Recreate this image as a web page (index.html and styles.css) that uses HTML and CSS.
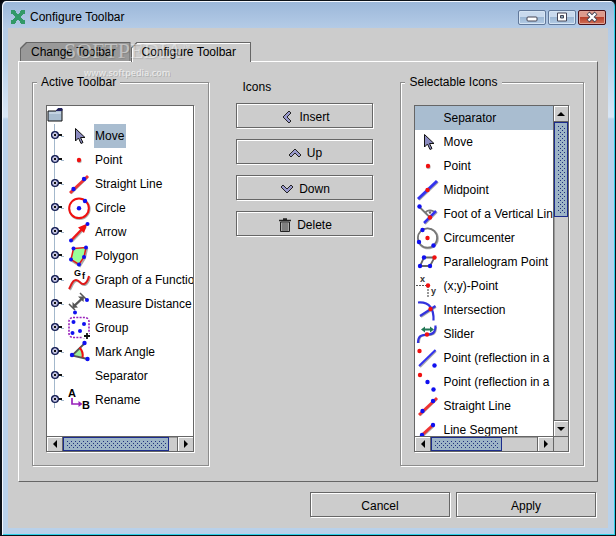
FILE: index.html
```html
<!DOCTYPE html>
<html lang="en">
<head>
<meta charset="utf-8">
<title>Configure Toolbar</title>
<link rel="stylesheet" href="styles.css">
</head>
<body>
<svg class="defs" aria-hidden="true">
  <symbol id="pointer" viewBox="0 0 24 24"><path d="M8.500 4.500v12.500l3-3 2.500 5.500 2-1-2.500-5h4.500z" fill="#8b8bc0" stroke="#111" stroke-width="1"/></symbol>
  <symbol id="point" viewBox="0 0 24 24"><circle cx="12.500" cy="13" r="2.300" fill="#bbb"/><circle class="r" cx="12" cy="12" r="2.200"/></symbol>
  <symbol id="line" viewBox="0 0 24 24"><path class="sh" d="M4 21.500 21 5"/><path d="M3 21 21 4" stroke="#e33" stroke-width="3"/><circle class="b" cx="6.500" cy="17" r="2.200"/><circle class="b" cx="17" cy="7" r="2.200"/></symbol>
  <symbol id="segment" viewBox="0 0 24 24"><path class="sh" d="M7 18 18 8"/><path d="M6 17 17 7" stroke="#e33" stroke-width="3"/><circle class="b" cx="6" cy="17" r="2.200"/><circle class="b" cx="17" cy="7" r="2.200"/></symbol>
  <symbol id="circle" viewBox="0 0 24 24"><circle cx="12.600" cy="13" r="10" fill="none" stroke="#aaa" stroke-width="2"/><circle cx="12" cy="12.300" r="9.800" fill="#fff" stroke="#f01010" stroke-width="2"/><circle class="b" cx="12" cy="12.300" r="2.200"/><circle class="b" cx="18" cy="5" r="2.200"/></symbol>
  <symbol id="arrow" viewBox="0 0 24 24"><path class="sh" d="M5 21.500 19 7"/><path d="M4 20.500 17 7" stroke="#f01818" stroke-width="2.500"/><path d="M20.500 3.500 11 7.500 17 13z" fill="#f01010"/><circle class="b" cx="4" cy="20.500" r="2"/><circle class="b" cx="20.500" cy="4" r="2"/></symbol>
  <symbol id="polygon" viewBox="0 0 24 24"><path class="sh" d="M7.500 6 20 5 18 14 13 22 5 17z"/><path d="M6.500 4.500 19 3.500 17 13 12 20.500 4 15.500z" fill="#9f9" stroke="#e01818" stroke-width="1.500"/><circle class="b" cx="6.500" cy="4.500" r="2"/><circle class="b" cx="19" cy="3.500" r="2"/><circle class="b" cx="17" cy="13" r="2"/><circle class="b" cx="12" cy="20.500" r="2"/><circle class="b" cx="4" cy="15.500" r="2"/></symbol>
  <symbol id="measure" viewBox="0 0 24 24"><path class="sh" d="M7 14.500 16 6"/><path d="M7 14 15 6.500" stroke="#555" stroke-width="2"/><path d="M5.500 16V10l5.500 5.500zM17 4.500h-6l5.500 5.500z" fill="#555"/><path d="M2 12l6 6M13 1l6 6" stroke="#555" stroke-width="1.500"/><circle class="b" cx="20" cy="8" r="2"/><circle class="b" cx="8" cy="20.500" r="2"/></symbol>
  <symbol id="group" viewBox="0 0 24 24"><rect x="2" y="1.500" width="20" height="20" rx="4" fill="none" stroke="#92b" stroke-width="1.600" stroke-dasharray="2 1.300"/><circle class="b" cx="6.500" cy="6" r="2"/><circle class="b" cx="17" cy="8" r="2"/><circle class="b" cx="13" cy="15" r="2"/><circle class="b" cx="5.500" cy="17" r="2"/><path d="M16 20h8M20 16v8" stroke="#fff" stroke-width="4"/><path d="M17 20h6M20 17v6" stroke="#111" stroke-width="1.800"/></symbol>
  <symbol id="angle" viewBox="0 0 24 24"><path d="M5 15 13 7q4 4 3 10z" fill="#9e9"/><path d="M18 3 5 15.500 20.500 19" fill="none" stroke="#555" stroke-width="1.800"/><path d="M12.500 7.500q4 4 3 10" fill="none" stroke="#f01010" stroke-width="2"/><circle class="b" cx="5" cy="15" r="2.200"/><circle class="b" cx="17.500" cy="3" r="2.200"/><circle class="b" cx="20.500" cy="19" r="2.200"/></symbol>
  <symbol id="midpoint" viewBox="0 0 24 24"><path class="sh" d="M3 22 22 4"/><path d="M2 21 21 3" stroke="#33e" stroke-width="3"/><circle class="r" cx="11.500" cy="12" r="2.200"/></symbol>
  <symbol id="foot" viewBox="0 0 24 24"><path class="sh" d="M9 22 21 10"/><path d="M3 4.500 14 15.500M9 11a6 6 0 0 1 10 0" fill="none" stroke="#777" stroke-width="1.800"/><path d="M8 21 20 9" stroke="#33e" stroke-width="2.500"/><circle cx="14" cy="10.500" r="1.200" fill="#666"/><circle class="b" cx="3.500" cy="4.500" r="2.200"/><circle class="r" cx="14" cy="15.500" r="2.200"/></symbol>
  <symbol id="circum" viewBox="0 0 24 24"><circle cx="12" cy="12.500" r="9.800" fill="none" stroke="#aaa" stroke-width="2"/><circle cx="11.500" cy="12" r="9.600" fill="#fff" stroke="#777" stroke-width="1.800"/><circle class="b" cx="6.500" cy="4" r="2.200"/><circle class="b" cx="3" cy="16" r="2.200"/><circle class="b" cx="17.500" cy="19.500" r="2.200"/><circle class="r" cx="11.500" cy="12" r="2.200"/></symbol>
  <symbol id="para" viewBox="0 0 24 24"><path d="M8 7.500h10.500L14 16H4z" fill="none" stroke="#666" stroke-width="1.800"/><circle class="b" cx="8" cy="7.500" r="2.200"/><circle class="r" cx="18.500" cy="7.500" r="2.200"/><circle class="b" cx="14" cy="16" r="2.200"/><circle class="b" cx="4" cy="16" r="2.200"/></symbol>
  <symbol id="intersect" viewBox="0 0 24 24"><path class="sh" d="M5 19 20 9"/><path d="M2 4.500c12-1 16 7 15.500 18M4 18 19.500 8" fill="none" stroke="#33d" stroke-width="2.200"/><circle class="r" cx="14.500" cy="11" r="2.200"/></symbol>
  <symbol id="slider" viewBox="0 0 24 24"><path class="sh" d="M3 21c0-8 4-8 9-8 6 0 8-2 8-8"/><path d="M2 21c0-8 4-8 9-8.500 6 0 8.500-2 8.500-9" fill="none" stroke="#33d" stroke-width="2.200"/><path d="m5 7.500 4-3v2h5v-2l4 3-4 3v-2H9v2z" fill="#275"/><circle class="r" cx="11" cy="12.500" r="2.200"/></symbol>
  <symbol id="mirror" viewBox="0 0 24 24"><path class="sh" d="M4 21 20 5"/><path d="M3 20 19.500 4" stroke="#33e" stroke-width="2"/><circle class="r" cx="3.500" cy="5" r="2.200"/><circle class="b" cx="18.500" cy="19.500" r="2.200"/></symbol>
  <symbol id="pmirror" viewBox="0 0 24 24"><circle class="r" cx="4" cy="5" r="2.200"/><circle class="b" cx="11.500" cy="12" r="2.200"/><circle class="b" cx="17.500" cy="19.500" r="2.200"/></symbol>
  <symbol id="handle" viewBox="0 0 16 24"><path d="M7 11h5" stroke="#111" stroke-width="2"/><path d="M11 12.500h3" stroke="#a3b8cc"/><circle cx="5" cy="11" r="3.300" fill="#fff" stroke="#111b50" stroke-width="1.500"/><circle cx="5" cy="11" r="2.200" fill="none" stroke="#99c" stroke-width="1"/><path d="M4 10h2v2H4z" fill="#111"/></symbol>
</svg>

<main class="window">
  <header class="titlebar">
    <svg class="logo" viewBox="0 0 14 14"><path d="M0 0h4v1h1v2h1v1h2V3h1V1h1V0h4v4h-2v1h-1v1h-1v2h1v1h1v1h2v4h-4v-1H9v-2H8v-1H6v1H5v2H4v1H0v-4h2V9h1V8h1V6H3V5H2V4H0z" fill="#329968"/></svg>
    <h1>Configure Toolbar</h1>
    <button class="wb" aria-label="Minimize"><svg viewBox="0 0 14 12"><rect x="2" y="6" width="10" height="4" rx="1" fill="#fff" stroke="#445" /></svg></button>
    <button class="wb" aria-label="Maximize"><svg viewBox="0 0 14 12"><path d="M2.500 2h9v8h-9z" fill="#fff" stroke="#445"/><path d="M5.500 4.500h3v2.500h-3z" fill="#8ab" stroke="#445"/></svg></button>
    <button class="wb close" aria-label="Close"><svg viewBox="0 0 14 12"><path d="m3 2 8 8M11 2l-8 8" stroke="#445" stroke-width="4"/><path d="m3.500 2.500 7 7M10.500 2.500l-7 7" stroke="#fff" stroke-width="2.400"/></svg></button>
  </header>

  <div class="content">
    <div class="tabs" role="tablist">
      <button class="tab back" role="tab" aria-selected="false"><span>Change Toolbar</span></button>
      <button class="tab front" role="tab" aria-selected="true"><span>Configure Toolbar</span></button>
      <div class="mark" aria-hidden="true"><b>SOFTPEDIA<sup>™</sup></b><i>www.softpedia.com</i></div>
    </div>
    <section class="panel">
      <fieldset>
        <legend>Active Toolbar</legend>
        <div class="box">
          <div class="tree">
            <svg class="folder" viewBox="0 0 16 16"><path d="M1 14V4h8l2-2h4v12z" fill="#a9bdd0" stroke="#111"/><path d="M9.500 3.500 11 1.500h4v2z" fill="#224" stroke="#226"/><path d="M2 6h12" stroke="#dde8f4"/></svg>
            <ul class="nodes">
              <li class="picked"><svg class="h"><use href="#handle"/></svg><svg class="i"><use href="#pointer"/></svg><span>Move</span></li>
              <li><svg class="h"><use href="#handle"/></svg><svg class="i"><use href="#point"/></svg><span>Point</span></li>
              <li><svg class="h"><use href="#handle"/></svg><svg class="i"><use href="#line"/></svg><span>Straight Line</span></li>
              <li><svg class="h"><use href="#handle"/></svg><svg class="i"><use href="#circle"/></svg><span>Circle</span></li>
              <li><svg class="h"><use href="#handle"/></svg><svg class="i"><use href="#arrow"/></svg><span>Arrow</span></li>
              <li><svg class="h"><use href="#handle"/></svg><svg class="i"><use href="#polygon"/></svg><span>Polygon</span></li>
              <li><svg class="h"><use href="#handle"/></svg><svg class="i" viewBox="0 0 24 24"><path class="sh" d="M3 22C5 19 6 13 10 13s4 5 8 4c3-1 4-4 5-8"/><path d="M2 21C4 18 5 12 9 12s4 5 8 4c3-1 4-4 5-8" fill="none" stroke="#e01818" stroke-width="2"/><text x="7" y="8" class="gl">G</text><text x="15" y="11" class="gl">f</text></svg><span>Graph of a Function</span></li>
              <li><svg class="h"><use href="#handle"/></svg><svg class="i"><use href="#measure"/></svg><span>Measure Distance</span></li>
              <li><svg class="h"><use href="#handle"/></svg><svg class="i"><use href="#group"/></svg><span>Group</span></li>
              <li><svg class="h"><use href="#handle"/></svg><svg class="i"><use href="#angle"/></svg><span>Mark Angle</span></li>
              <li><svg class="h"><use href="#handle"/></svg><svg class="i"></svg><span>Separator</span></li>
              <li><svg class="h"><use href="#handle"/></svg><svg class="i" viewBox="0 0 24 24"><text x="1" y="9" class="nl">A</text><text x="15" y="21" class="nl">B</text><path d="M5 10v6h9" fill="none" stroke="#92b" stroke-width="1.700"/><path d="M11.500 13v6l4-3z" fill="#92b"/></svg><span>Rename</span></li>
            </ul>
          </div>
          <div class="bar across">
            <button class="step" aria-label="Scroll left"><svg viewBox="0 0 8 8"><path d="M6 0v8L2 4z"/></svg></button>
            <div class="track"><div class="thumb wide"></div></div>
            <button class="step" aria-label="Scroll right"><svg viewBox="0 0 8 8"><path d="M2 0v8l4-4z"/></svg></button>
          </div>
        </div>
      </fieldset>

      <div class="actions">
        <h2>Icons</h2>
        <button class="btn"><svg viewBox="0 0 14 14"><path d="m9 1 2 2-4 4 4 4-2 2-6-6z" fill="#99c" stroke="#222"/></svg>Insert</button>
        <button class="btn"><svg viewBox="0 0 14 14"><path d="m1 9 6-6 6 6-2 2-4-4-4 4z" fill="#99c" stroke="#222"/></svg>Up</button>
        <button class="btn"><svg viewBox="0 0 14 14"><path d="m1 5 2-2 4 4 4-4 2 2-6 6z" fill="#99c" stroke="#222"/></svg>Down</button>
        <button class="btn"><svg viewBox="0 0 14 14"><path d="M2.500 4h9v9.500h-9z" fill="#aaa" stroke="#222"/><path d="M1 2.500h12M5 1h4" stroke="#222" stroke-width="1.500"/><path d="M5 5v8M7 5v8M9 5v8" stroke="#555"/></svg>Delete</button>
      </div>

      <fieldset>
        <legend>Selectable Icons</legend>
        <div class="box both">
          <ul class="choices">
            <li class="picked"><svg class="i"></svg><span>Separator</span></li>
            <li><svg class="i"><use href="#pointer"/></svg><span>Move</span></li>
            <li><svg class="i"><use href="#point"/></svg><span>Point</span></li>
            <li><svg class="i"><use href="#midpoint"/></svg><span>Midpoint</span></li>
            <li><svg class="i"><use href="#foot"/></svg><span>Foot of a Vertical Line</span></li>
            <li><svg class="i"><use href="#circum"/></svg><span>Circumcenter</span></li>
            <li><svg class="i"><use href="#para"/></svg><span>Parallelogram Point</span></li>
            <li><svg class="i" viewBox="0 0 24 24"><path d="M0 11.500h11M12 12v11" stroke="#555" stroke-width="1.200" stroke-dasharray="2 1"/><circle class="r" cx="12" cy="11.500" r="2.200"/><text x="4" y="8" class="xl">x</text><text x="15" y="20" class="xl">y</text></svg><span>(x;y)-Point</span></li>
            <li><svg class="i"><use href="#intersect"/></svg><span>Intersection</span></li>
            <li><svg class="i"><use href="#slider"/></svg><span>Slider</span></li>
            <li><svg class="i"><use href="#mirror"/></svg><span>Point (reflection in a</span></li>
            <li><svg class="i"><use href="#pmirror"/></svg><span>Point (reflection in a</span></li>
            <li><svg class="i"><use href="#line"/></svg><span>Straight Line</span></li>
            <li><svg class="i"><use href="#segment"/></svg><span>Line Segment</span></li>
          </ul>
          <div class="bar down">
            <button class="step" aria-label="Scroll up"><svg viewBox="0 0 8 8"><path d="M0 6h8L4 2z"/></svg></button>
            <div class="track"><div class="thumb tall"></div></div>
            <button class="step" aria-label="Scroll down"><svg viewBox="0 0 8 8"><path d="M0 2h8L4 6z"/></svg></button>
          </div>
          <div class="bar across">
            <button class="step" aria-label="Scroll left"><svg viewBox="0 0 8 8"><path d="M6 0v8L2 4z"/></svg></button>
            <div class="track"><div class="thumb mid"></div></div>
            <button class="step" aria-label="Scroll right"><svg viewBox="0 0 8 8"><path d="M2 0v8l4-4z"/></svg></button>
          </div>
          <div class="corner"></div>
        </div>
      </fieldset>
    </section>
    <footer class="foot">
      <button class="btn">Cancel</button>
      <button class="btn">Apply</button>
    </footer>
  </div>
</main>
</body>
</html>
```
FILE: styles.css
```css
* { box-sizing: border-box; }
body {
  margin: 0;
  background: #05050c;
  font: 12px/16px "Liberation Sans", Arial, sans-serif;
  color: #000;
}
button { font: inherit; color: inherit; }
.defs { position: absolute; width: 0; height: 0; }
.r { fill: #f01010; }
.b { fill: #1010f0; }
.sh { fill: none; stroke: #aaa; stroke-width: 2; }
.gl { font: bold 9px "Liberation Sans", sans-serif; }
.nl { font: bold 11px "Liberation Sans", sans-serif; }
.xl { font: bold 9px "Liberation Sans", sans-serif; fill: #333; }

.window {
  display: flex;
  flex-direction: column;
  height: 100vh;
  min-height: 480px;
  padding: 0 7px 7px 6px;
  border: 1px solid #0b1118;
  border-left-width: 2px;
  background: linear-gradient(#9bb7d9, #b4cbe6 27px, #b9d1ea 60px, #d9e7f6 116px, #b9d1ea 118px);
  box-shadow: inset 1px 1px 0 #f4f8ff, inset -1px -1px 0 #2cd0e8;
  border-radius: 6px 6px 0 0;
}
.titlebar {
  display: flex;
  align-items: center;
  flex: none;
  height: 27px;
  padding: 5px 2px 0 3px;
}
.logo { width: 14px; height: 14px; }
h1 { flex: 1; margin: 0 0 0 5px; font-size: 12px; font-weight: 400; line-height: 16px; }
.wb {
  display: grid;
  place-items: center;
  width: 28px;
  height: 15px;
  margin-left: 2px;
  padding: 0;
  border: 1px solid #61789a;
  border-radius: 2px;
  background: linear-gradient(#c9daee 45%, #9db8d5 50%, #b4cce6);
  box-shadow: inset 0 0 0 1px #d6e5f4;
}
.wb svg { width: 14px; height: 12px; }
.close {
  border-color: #4a1018;
  background: linear-gradient(#dd9a8c 45%, #b8402c 50%, #d07058);
  box-shadow: inset 0 0 0 1px #e0a498;
}

.content {
  display: flex;
  flex: 1;
  flex-direction: column;
  min-height: 0;
  padding: 14px 10px 11px;
  background: #ccc;
}
.tabs { position: relative; display: flex; flex: none; height: 19px; padding-left: 2px; }
.tab {
  position: relative;
  isolation: isolate;
  height: 19px;
  padding: 0 15px 0 11px;
  border: 0;
  background: #666;
  clip-path: polygon(6px 0, 100% 0, 100% 100%, 0 100%, 0 6px);
}
.tab::before {
  content: "";
  position: absolute;
  z-index: -1;
  inset: 1px 1px 0 1px;
  background: #999;
  clip-path: polygon(6px 0, 100% 0, 100% 100%, 0 100%, 0 6px);
}
.front::before { background: #ccc; box-shadow: inset 1px 1px 0 #fff; }
.front { height: 20px; z-index: 1; }
.mark {
  position: absolute;
  z-index: 2;
  left: 46px;
  top: 0;
  color: rgba(255, 255, 255, .45);
  white-space: nowrap;
  pointer-events: none;
}
.mark b { display: block; font: 22px/18px "Liberation Serif", serif; text-shadow: 1px 1px 1px rgba(0, 0, 0, .12); }
.mark sup { font-size: 8px; line-height: 0; }
.mark i { display: block; margin: 5px 0 0 20px; font: 600 9px/16px "Open Sans", sans-serif; color: rgba(255, 255, 255, .6); text-shadow: 1px 1px 0 rgba(0, 0, 0, .15); }

.panel {
  display: grid;
  flex: 1;
  grid-template-columns: minmax(0, 177fr) 137px minmax(0, 183fr);
  grid-template-rows: minmax(0, 1fr);
  column-gap: 27px;
  min-height: 0;
  padding: 12px 13px 15px;
  border: 1px solid;
  border-color: #fff #666 #666 #fff;
}
fieldset {
  display: flex;
  min-width: 0;
  min-height: 0;
  margin: 0;
  padding: 15px 14px 13px 13px;
  border: 1px solid #8c8c8c;
  box-shadow: 1px 1px 0 #fff, inset 1px 1px 0 #fff;
}
legend { margin-left: -9px; padding: 0 4px; background: #ccc; }
.box {
  display: grid;
  flex: 1;
  grid-template-rows: minmax(0, 1fr) 15px;
  grid-template-columns: minmax(0, 1fr);
  min-width: 0;
  border: 1px solid #666;
  box-shadow: 1px 1px 0 #fff;
  background: #fff;
}
.both { grid-template-columns: minmax(0, 1fr) 15px; }
.tree, .choices { overflow: hidden; min-height: 0; }
ul { margin: 0; padding: 0; list-style: none; }
.folder { display: block; width: 16px; height: 16px; margin: 1px 0; }
.nodes { background: linear-gradient(#a3b8cc, #a3b8cc) 7px 0 / 1px 284px no-repeat; }
li { display: flex; height: 24px; white-space: nowrap; align-items: center; }
.h { flex: none; width: 16px; height: 24px; margin: 0 1px 0 3px; }
.i { flex: none; width: 24px; height: 24px; }
.nodes span { margin-left: 4px; line-height: 24px; padding-right: 2px; }
.nodes .picked span { background: #a9bdd0; margin-left: 3px; padding-left: 1px; }
.choices .i { margin: 0 3px 0 1px; }
.choices .picked { background: #a9bdd0; }

.bar { display: flex; min-width: 0; min-height: 0; background: #ccc; }
.across { border-top: 1px solid #666; }
.down { flex-direction: column; border-left: 1px solid #666; }
.step {
  display: grid;
  flex: none;
  place-items: center;
  width: 15px;
  height: 14px;
  padding: 0;
  border: 0;
  background: #ccc;
  box-shadow: inset 1px 1px 0 #fff;
}
.down .step { width: 14px; height: 15px; }
.step svg { width: 8px; height: 8px; }
.track { flex: 1; min-width: 0; min-height: 0; border: 0 solid #666; box-shadow: inset 1px 1px 0 #999; }
.across .track { border-width: 0 1px; }
.down .track { border-width: 1px 0; }
.thumb {
  height: 100%;
  border: 1px solid #1c2c8c;
  background: conic-gradient(from 90deg at 3px 3px, #203080 25%, transparent 0) 0 0 / 4px 4px,
    conic-gradient(from 90deg at 3px 3px, #203080 25%, transparent 0) 2px 2px / 4px 4px, #9db4c6;
  box-shadow: inset 0 0 0 2px #9db4c6;
}
.wide { width: 93%; }
.mid { width: 67%; }
.tall { height: 32%; }
.corner { border: 1px solid #666; border-width: 1px 0 0 1px; background: #ccc; }

.actions { display: flex; flex-direction: column; gap: 11px; }
h2 { margin: 5px 0 -3px 6px; font-size: 12px; font-weight: 400; line-height: 16px; }
.btn {
  display: flex;
  align-items: center;
  justify-content: center;
  gap: 5px;
  height: 25px;
  padding: 2px 0 0;
  border: 1px solid #666;
  background: #ccc;
  box-shadow: inset 1px 1px 0 #fff, 1px 1px 0 #fff;
}
.btn svg { width: 14px; height: 14px; }
.foot { display: flex; flex: none; justify-content: flex-end; gap: 6px; padding: 10px 2px 0 0; }
.foot .btn { width: 140px; }
```
